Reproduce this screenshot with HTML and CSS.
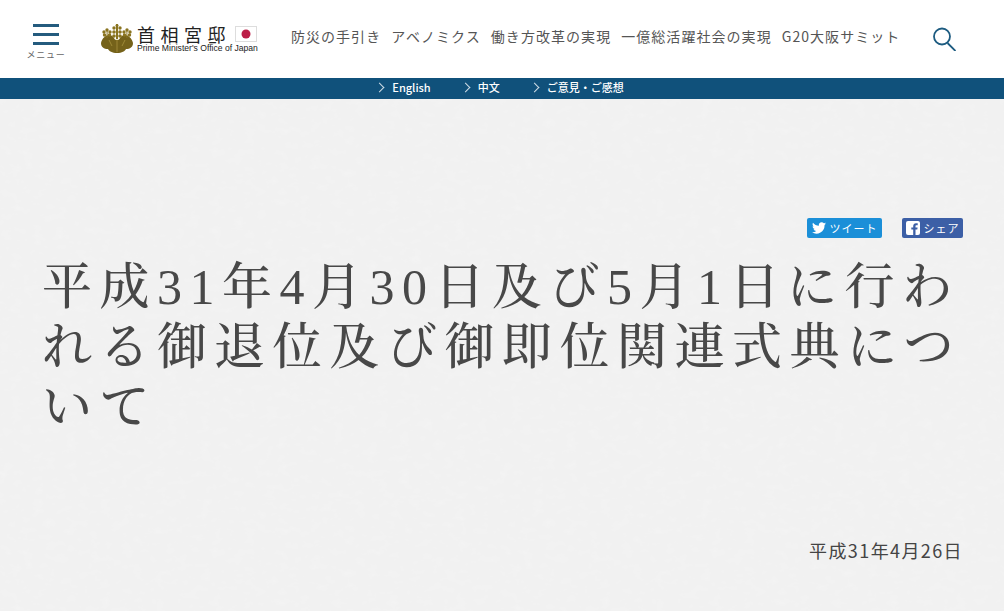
FILE: index.html
```html
<!DOCTYPE html>
<html lang="ja">
<head>
<meta charset="utf-8">
<title>首相官邸</title>
<link rel="stylesheet" href="styles.css">
</head>
<body>
<header class="header">
  <a class="menu">
    <span class="menu-icon"><i></i><i></i><i></i></span>
    <span class="menu-label">メニュー</span>
  </a>
  <a class="logo">
    <svg class="emblem" width="32" height="29" viewBox="0 0 32 29">
      <g fill="#8a7420">
        <path d="M0 19c1-5 5-8 8-8 2 0 4 1 5 3 1 2 2 2 3 2s2 0 3-2c1-2 3-3 5-3 3 0 7 3 8 8 0 4-3 6-7 6-1 2-4 4-9 4s-8-2-9-4c-4 0-7-2-7-6z" fill="#75621a"/>
        <rect x="5.600" y="5" width="1" height="9"/><rect x="15" y="0" width="2" height="15"/><rect x="25.400" y="5" width="1" height="9"/>
        <circle cx="6" cy="6" r="1.700"/><circle cx="3" cy="8" r="1.700"/><circle cx="9" cy="8" r="1.700"/><circle cx="3.500" cy="11" r="1.700"/><circle cx="8.500" cy="11" r="1.700"/>
        <circle cx="26" cy="6" r="1.700"/><circle cx="23" cy="8" r="1.700"/><circle cx="29" cy="8" r="1.700"/><circle cx="23.500" cy="11" r="1.700"/><circle cx="28.500" cy="11" r="1.700"/>
        <circle cx="16" cy="1.500" r="1.500"/><circle cx="13" cy="4" r="1.700"/><circle cx="19" cy="4" r="1.700"/><circle cx="13" cy="8" r="1.800"/><circle cx="19" cy="8" r="1.800"/><circle cx="13" cy="12" r="1.800"/><circle cx="19" cy="12" r="1.800"/>
      </g>
      <path d="M16 15v13M8 16l3 6M24 16l-3 6" stroke="#b9a24a" stroke-width=".6" fill="none"/>
    </svg>
    <span class="logo-text">
      <span class="logo-row">
        <span class="logo-ja">首相宮邸</span>
        <svg class="flag" width="22" height="16" viewBox="0 0 22 16"><rect x=".5" y=".5" width="21" height="15" fill="#fff" stroke="#ddd"/><circle cx="11" cy="8" r="4.500" fill="#bc1e48"/></svg>
      </span>
      <span class="logo-en">Prime Minister's Office of Japan</span>
    </span>
  </a>
  <nav class="nav">
    <a>防災の手引き</a>
    <a>アベノミクス</a>
    <a>働き方改革の実現</a>
    <a>一億総活躍社会の実現</a>
    <a>G20大阪サミット</a>
  </nav>
  <a class="search">
    <svg width="23" height="24" viewBox="0 0 23 24" fill="none" stroke="#1c5b80" stroke-width="1.800"><circle cx="9" cy="9.500" r="8"/><path d="M14.500 16l8 8"/></svg>
  </a>
</header>
<div class="subbar">
  <a class="sub-link">English</a>
  <a class="sub-link">中文</a>
  <a class="sub-link">ご意見・ご感想</a>
</div>
<main class="main">
  <div class="share">
    <a class="btn btn-tw">
      <svg width="14" height="12" viewBox="0 0 24 20"><path fill="#fff" d="M24 2.400c-.9.400-1.800.7-2.800.8 1-.6 1.800-1.600 2.200-2.700-1 .6-2 1-3.100 1.200A4.900 4.900 0 0 0 11.900 6.200C7.800 6 4.200 4 1.700.9c-1.300 2.200-.7 5.100 1.500 6.600-.8 0-1.600-.2-2.200-.6 0 2.400 1.700 4.400 3.900 4.900-.7.200-1.500.2-2.200.1.600 2 2.400 3.400 4.600 3.400A9.900 9.900 0 0 1 0 17.300 14 14 0 0 0 21.500 4.900c1-.7 1.800-1.500 2.500-2.500z"/></svg>
      ツイート
    </a>
    <a class="btn btn-fb">
      <svg width="14" height="14" viewBox="0 0 14 14"><rect width="14" height="14" rx="2" fill="#fff"/><path fill="#3c5fa6" d="M9.500 14V8.600h1.800l.3-2.100H9.500V5.200c0-.6.200-1 1-1h1.200V2.300c-.2 0-.9-.1-1.700-.1-1.700 0-2.800 1-2.800 2.900v1.400H5.300v2.100h1.900V14z"/></svg>
      シェア
    </a>
  </div>
  <h1 class="title">平成31年4月30日及び5月1日に行われる御退位及び御即位関連式典について</h1>
  <p class="date">平成31年4月26日</p>
</main>
</body>
</html>
```
FILE: styles.css
```css
* { box-sizing: border-box; }
html, body { margin: 0; height: 100%; }
body {
  width: 1004px;
  height: 611px;
  overflow: hidden;
  background: #fff;
  color: #4d4d4d;
  font-family: "Noto Sans CJK JP", "Noto Sans", sans-serif;
}
a { color: inherit; text-decoration: none; }

.header {
  height: 78px;
  display: flex;
  align-items: flex-start;
  background: #fff;
}
.menu {
  width: 36px;
  margin: 24px 0 0 28px;
  display: flex;
  flex-direction: column;
  align-items: center;
}
.menu-icon { display: flex; flex-direction: column; gap: 6px; width: 26px; }
.menu-icon i { display: block; height: 3px; background: #245b7e; }
.menu-label { margin-top: 3px; font-size: 9px; line-height: 13px; letter-spacing: .7px; color: #666; white-space: nowrap; }

.logo { display: flex; margin: 24px 0 0 37px; align-items: flex-start; }
.emblem { display: block; }
.logo-text { margin-left: 4px; display: flex; flex-direction: column; margin-top: 1px; }
.logo-row { display: flex; align-items: center; height: 18px; }
.logo-ja { font-size: 18px; line-height: 18px; letter-spacing: 5.500px; color: #222; width: 98px; white-space: nowrap; }
.flag { display: block; }
.logo-en { font-family: "Liberation Sans", sans-serif; font-size: 8.600px; line-height: 9px; margin-top: 1px; color: #222; white-space: nowrap; }

.nav { display: flex; gap: 10px; margin: 26px 0 0 33px; font-size: 14px; line-height: 20px; letter-spacing: 1.050px; color: #555; white-space: nowrap; }
.search { margin: 27px 0 0 33px; display: block; }
.search svg { display: block; }

.subbar {
  height: 21px;
  background: #10517b;
  display: flex;
  justify-content: center;
  gap: 32px;
  align-items: center;
  padding: 0 3px 2px 0;
  color: #fff;
  font-size: 11px;
  font-weight: 500;
  line-height: 19px;
}
.sub-link { display: flex; align-items: center; white-space: nowrap; }
.sub-link::before {
  content: "";
  width: 6px;
  height: 6px;
  margin: 0 9px 0 -1px;
  border-top: 1px solid #cfdde6;
  border-right: 1px solid #cfdde6;
  transform: rotate(45deg);
}

.main {
  height: 512px;
  padding: 119px 41px 0 42px;
  background-color: #f1f1f1;
  background-image: url("data:image/svg+xml,%3Csvg xmlns='http://www.w3.org/2000/svg' width='500' height='400'%3E%3Cfilter id='n'%3E%3CfeTurbulence type='fractalNoise' baseFrequency='.09 .14' numOctaves='3' seed='4'/%3E%3CfeColorMatrix values='0 0 0 0 1 0 0 0 0 1 0 0 0 0 1 2.500 0 0 0 -1.250'/%3E%3C/filter%3E%3Crect width='500' height='400' filter='url(%23n)' opacity='.15'/%3E%3C/svg%3E");
}
.share { display: flex; justify-content: flex-end; gap: 20px; }
.btn { height: 20px; display: flex; align-items: center; justify-content: center; gap: 4px; border-radius: 2px; color: #fff; font-size: 11px; letter-spacing: 1px; }
.btn-tw { width: 75px; background: #1b8fd8; }
.btn-fb { width: 61px; background: #3c5fa6; }

.title {
  margin: 19px 0 0;
  font-family: "Liberation Serif", "Noto Serif CJK JP", "Noto Sans CJK JP", serif;
  font-size: 50px;
  font-weight: 500;
  line-height: 60px;
  letter-spacing: 7.500px;
  color: #484848;
}
.date { margin: 101px 0 0; text-align: right; font-size: 18px; line-height: 24px; letter-spacing: 1.400px; color: #444; }
```
